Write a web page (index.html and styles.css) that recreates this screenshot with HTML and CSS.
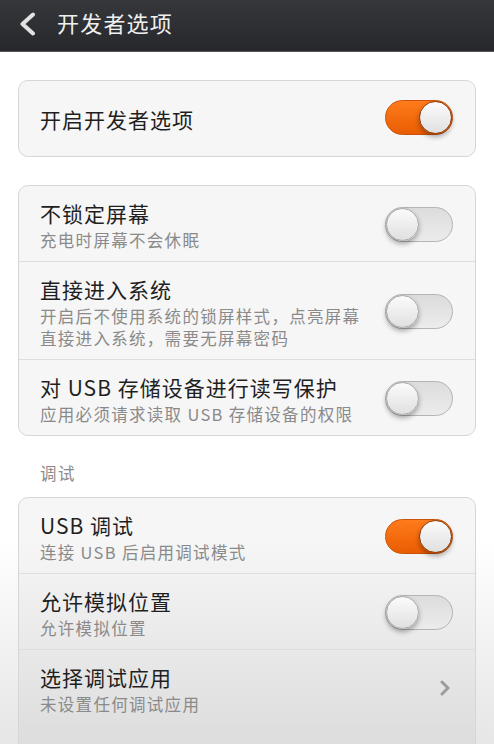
FILE: index.html
```html
<!DOCTYPE html>
<html lang="zh-CN">
<head>
  <meta charset="UTF-8">
  <meta name="viewport" content="width=device-width, initial-scale=1.0">
  <title>开发者选项</title>
  <link rel="stylesheet" href="styles.css">
</head>
<body>
  <div class="title-bar">
    <svg class="back" width="18" height="24" viewBox="0 0 18 24">
      <path d="M15 2.5 L4.5 12 L15 21.5" fill="none" stroke="#e2e2e2" stroke-width="4" stroke-linecap="round" stroke-linejoin="round"/>
    </svg>
    <h1>开发者选项</h1>
  </div>

  <div class="content">
    <!-- master switch -->
    <div class="card">
      <div class="row single">
        <div class="text">
          <div class="label">开启开发者选项</div>
        </div>
        <span class="switch on"><span class="knob"></span></span>
      </div>
    </div>

    <div class="card">
      <div class="row">
        <div class="text">
          <div class="label">不锁定屏幕</div>
          <div class="summary">充电时屏幕不会休眠</div>
        </div>
        <span class="switch"><span class="knob"></span></span>
      </div>
      <div class="row">
        <div class="text">
          <div class="label">直接进入系统</div>
          <div class="summary">开启后不使用系统的锁屏样式，点亮屏幕<br>直接进入系统，需要无屏幕密码</div>
        </div>
        <span class="switch"><span class="knob"></span></span>
      </div>
      <div class="row">
        <div class="text">
          <div class="label">对 USB 存储设备进行读写保护</div>
          <div class="summary">应用必须请求读取 USB 存储设备的权限</div>
        </div>
        <span class="switch"><span class="knob"></span></span>
      </div>
    </div>

    <div class="section-title">调试</div>

    <div class="card">
      <div class="row">
        <div class="text">
          <div class="label">USB 调试</div>
          <div class="summary">连接 USB 后启用调试模式</div>
        </div>
        <span class="switch on"><span class="knob"></span></span>
      </div>
      <div class="row">
        <div class="text">
          <div class="label">允许模拟位置</div>
          <div class="summary">允许模拟位置</div>
        </div>
        <span class="switch"><span class="knob"></span></span>
      </div>
      <div class="row">
        <div class="text">
          <div class="label">选择调试应用</div>
          <div class="summary">未设置任何调试应用</div>
        </div>
        <svg class="arrow" width="12" height="16" viewBox="0 0 12 16">
          <path d="M3 2 L9 8 L3 14" fill="none" stroke="#9c9c9c" stroke-width="3" stroke-linecap="round" stroke-linejoin="round"/>
        </svg>
      </div>
      <div class="row last"></div>
    </div>
  </div>
</body>
</html>
```

FILE: styles.css
```css
/* whole screen, fades to grey near the bottom */
body {
  margin: 0;
  height: 100vh;
  overflow: hidden;
  font-family: "Noto Sans CJK SC", "Noto Sans", sans-serif;
  background: linear-gradient(to bottom, #ffffff 0, #ffffff 540px, #e6e6e6 100%);
  color: #222;
}

/* dark action bar */
.title-bar {
  height: 51px;
  display: flex;
  align-items: center;
  padding-left: 18px;
  gap: 21px;
  background: linear-gradient(to bottom, #35373b, #26282c);
  border-bottom: 1px solid #55575a;
}

.title-bar .back {
  margin-top: -3px;
}

.title-bar h1 {
  margin: -7px 0 0;
  font-size: 22px;
  font-weight: normal;
  letter-spacing: 1.2px;
  line-height: 30px;
  color: #f0f0f0;
}

.content {
  padding: 28px 18px 0;
}

/* grouped list */
.card {
  background: rgba(0, 0, 0, 0.035);
  border: 1px solid #d6d6d6;
  border-radius: 10px;
  margin-bottom: 28px;
}

.row {
  display: flex;
  align-items: center;
  padding: 14px 22px 10px 21px;
}

.row + .row {
  border-top: 1px solid #dedede;
}

.row.single {
  height: 75px;
  padding-top: 0;
  padding-bottom: 0;
}

.row.last {
  height: 60px;
}

.text {
  flex: 1;
  white-space: nowrap;
}

.label {
  font-size: 21px;
  letter-spacing: 1px;
  line-height: 26px;
  color: #1f1f1f;
}

.summary {
  margin-top: 3px;
  font-size: 16.5px;
  letter-spacing: 1.3px;
  line-height: 22px;
  color: #8a8a8a;
}

.section-title {
  margin: -3px 0 12px 22px;
  font-size: 16.5px;
  letter-spacing: 1.6px;
  line-height: 24px;
  color: #8a8a8a;
}

/* toggle */
.switch {
  width: 68px;
  height: 35px;
  box-sizing: border-box;
  border-radius: 18px;
  display: flex;
  align-items: center;
  background: linear-gradient(to bottom, #dcdcdc, #ececec);
  border: 1px solid #b4b4b4;
  margin-top: -3px;
}

.switch.on {
  justify-content: flex-end;
  background: linear-gradient(to bottom, #ff7b1c, #e95d02);
  border-color: #c9530a;
}

.knob {
  width: 33px;
  height: 33px;
  box-sizing: border-box;
  border-radius: 50%;
  background: linear-gradient(to bottom, #fbfbfb, #e0e0e0);
  border: 1px solid #a9a9a9;
  box-shadow: 0 3px 5px rgba(0, 0, 0, 0.32);
}

.switch.on .knob {
  border-color: #8c3a06;
}

.arrow {
  margin-right: 2px;
  margin-top: -4px;
}
```
